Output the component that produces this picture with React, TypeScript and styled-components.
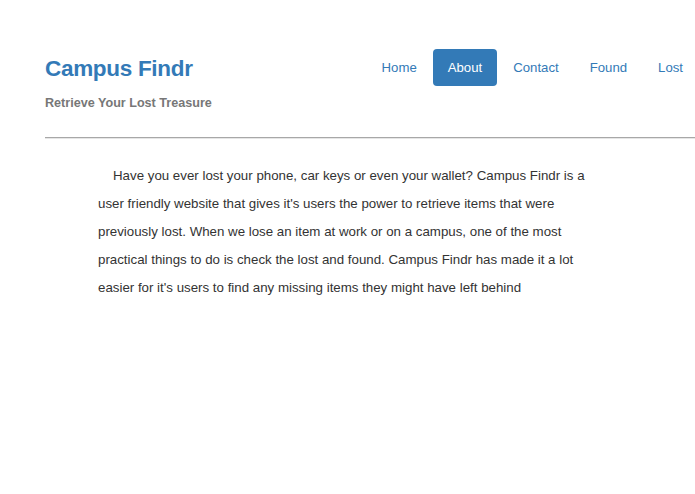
import React from "react";
import styled, { createGlobalStyle } from "styled-components";

const Global = createGlobalStyle`
  html, body { margin: 0; padding: 0; background: #fff; overflow: hidden; }
  body { font-family: "Liberation Sans", Arial, Helvetica, sans-serif; color: #333; }
`;

const Page = styled.div`
  width: 695px;
  overflow: hidden;
`;

const Header = styled.header`
  display: flex;
  justify-content: space-between;
  align-items: flex-start;
  width: 653px;
  margin-left: 45px;
  padding-top: 49px;
`;

const Brand = styled.div`
  display: flex;
  flex-direction: column;
`;

const Title = styled.h1`
  margin: 6px 0 0 0;
  font-size: 22.5px;
  line-height: 28px;
  font-weight: 700;
  color: #337ab7;
  letter-spacing: -0.3px;
`;

const Tagline = styled.div`
  margin-top: 12px;
  font-size: 12.6px;
  line-height: 16px;
  font-weight: 700;
  color: #777;
`;

const Nav = styled.nav`
  display: flex;
  gap: 1px;
`;

const NavLink = styled.a<{ $active?: boolean }>`
  display: block;
  padding: 10px 15px;
  font-size: 13.2px;
  line-height: 17px;
  border-radius: 4px;
  text-decoration: none;
  color: ${(p) => (p.$active ? "#fff" : "#337ab7")};
  background: ${(p) => (p.$active ? "#337ab7" : "transparent")};
  cursor: pointer;
`;

const Rule = styled.hr`
  margin: 26px 0 0 45px;
  height: 0;
  border: 0;
  border-top: 1px solid #a8a8a8;
  border-bottom: 1px solid #e6e6e6;
`;

const Content = styled.p`
  margin: 23px 0 0 98px;
  width: 495px;
  font-size: 13.3px;
  line-height: 28px;
  color: #333;
  text-indent: 15px;
`;

export default function App() {
  const links = ["Home", "About", "Contact", "Found", "Lost"];
  return (
    <Page>
      <Global />
      <Header>
        <Brand>
          <Title>Campus Findr</Title>
          <Tagline>Retrieve Your Lost Treasure</Tagline>
        </Brand>
        <Nav>
          {links.map((l) => (
            <NavLink key={l} $active={l === "About"}>
              {l}
            </NavLink>
          ))}
        </Nav>
      </Header>
      <Rule />
      <Content>
        Have you ever lost your phone, car keys or even your wallet? Campus Findr is a user friendly
        website that gives it's users the power to retrieve items that were previously lost. When we
        lose an item at work or on a campus, one of the most practical things to do is check the lost
        and found. Campus Findr has made it a lot easier for it's users to find any missing items they
        might have left behind
      </Content>
    </Page>
  );
}
